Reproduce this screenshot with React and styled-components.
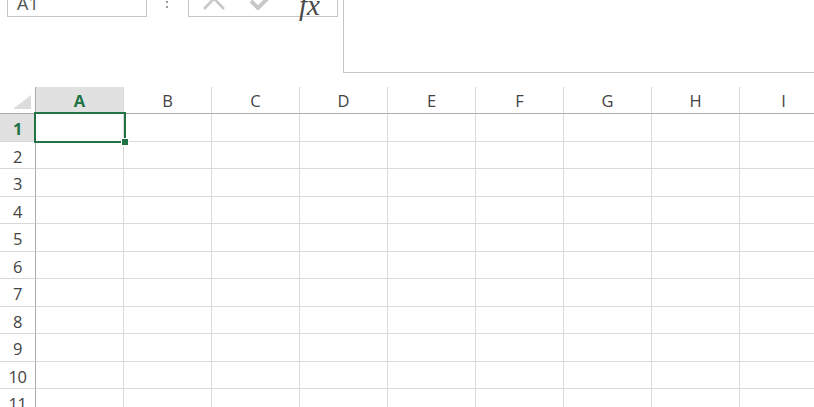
import React from 'react';
import styled, { createGlobalStyle } from 'styled-components';

const GlobalStyle = createGlobalStyle`
  html, body {
    margin: 0;
    padding: 0;
    background: #ffffff;
    overflow: hidden;
  }
  body {
    font-family: "Open Sans", "Noto Sans", "Liberation Sans", sans-serif;
    color: #444444;
  }
`;

const GREEN = '#217346';
const COLUMNS = ['A', 'B', 'C', 'D', 'E', 'F', 'G', 'H', 'I'];
const ROWS = [1, 2, 3, 4, 5, 6, 7, 8, 9, 10, 11];

const Page = styled.div`
  width: 814px;
  height: 407px;
  overflow: hidden;
  background: #ffffff;
`;

const TopBar = styled.div`
  display: flex;
  align-items: flex-start;
  height: 87px;
  padding-left: 7px;
`;

const NameBox = styled.div`
  box-sizing: border-box;
  display: flex;
  align-items: flex-end;
  justify-content: space-between;
  width: 140px;
  height: 29px;
  margin-top: -12px;
  padding: 0 9px 3px 9px;
  border: 1px solid #c6c6c6;
  font-size: 18px;
  line-height: 20px;
  color: #505050;
`;

const DropArrow = styled.span`
  font-size: 9px;
  line-height: 9px;
  margin-bottom: 13px;
  color: #707070;
`;

const Dots = styled.div`
  display: flex;
  flex-direction: column;
  gap: 3px;
  margin: 0 20px 0 19px;
  padding-top: 1px;
`;

const Dot = styled.span`
  width: 2px;
  height: 2px;
  background: #9a9a9a;
`;

const FxButtons = styled.div`
  box-sizing: border-box;
  display: flex;
  align-items: flex-end;
  gap: 22px;
  width: 150px;
  height: 29px;
  margin-top: -12px;
  padding: 0 0 6px 12px;
  border: 1px solid #c6c6c6;
`;

const FxLabel = styled.span`
  font-family: "Liberation Serif", "DejaVu Serif", serif;
  font-style: italic;
  font-size: 29px;
  line-height: 29px;
  color: #4a4a4a;
  margin-bottom: -10px;
  margin-left: 4px;
`;

const FormulaInput = styled.div`
  flex: 1;
  height: 85px;
  margin: -12px -10px 0 5px;
  border: 1px solid #c6c6c6;
  box-sizing: border-box;
`;

const Grid = styled.div`
  display: grid;
  grid-template-columns: 36px repeat(9, 88px);
  grid-template-rows: 27px repeat(5, 28px 27px) 28px;
`;

const Corner = styled.div`
  box-sizing: border-box;
  display: flex;
  align-items: flex-end;
  justify-content: flex-end;
  padding: 0 4px 4px 0;
  border-right: 1px solid #ababab;
  border-bottom: 1px solid #ababab;
`;

const ColHead = styled.div`
  box-sizing: border-box;
  display: flex;
  align-items: center;
  justify-content: center;
  padding-top: 1px;
  font-size: 16.5px;
  border-right: 1px solid #d8d8d8;
  border-bottom: 1px solid #ababab;
  background: ${(p) => (p.$active ? '#e1e1e1' : '#ffffff')};
  color: ${(p) => (p.$active ? GREEN : '#444444')};
  font-weight: ${(p) => (p.$active ? 700 : 400)};
`;

const RowHead = styled.div`
  box-sizing: border-box;
  display: flex;
  align-items: center;
  justify-content: center;
  padding-top: 2px;
  font-size: 16.5px;
  letter-spacing: -0.5px;
  border-right: 1px solid #ababab;
  border-bottom: 1px solid #d8d8d8;
  background: ${(p) => (p.$active ? '#e1e1e1' : '#ffffff')};
  color: ${(p) => (p.$active ? GREEN : '#444444')};
  font-weight: ${(p) => (p.$active ? 700 : 400)};
`;

const Cell = styled.div`
  box-sizing: border-box;
  position: relative;
  border-right: 1px solid #dadada;
  border-bottom: 1px solid #dadada;
`;

const Selection = styled.div`
  position: absolute;
  top: -2px;
  left: -2px;
  width: 92px;
  height: 31px;
  box-sizing: border-box;
  border: 2px solid ${GREEN};
  z-index: 2;
`;

const Handle = styled.span`
  position: absolute;
  right: -5px;
  bottom: -5px;
  width: 6px;
  height: 6px;
  background: ${GREEN};
  border: 1px solid #ffffff;
`;

const CancelIcon = () => (
  <svg width="26" height="26" viewBox="0 0 26 26">
    <path d="M3 4 L23 25 M23 4 L3 25" stroke="#c8c8c8" strokeWidth="2.6" fill="none" />
  </svg>
);

const EnterIcon = () => (
  <svg width="24" height="26" viewBox="0 0 24 26">
    <path d="M2 17 L9 24 L22 11" stroke="#c8c8c8" strokeWidth="4" fill="none" />
  </svg>
);

const CornerTriangle = () => (
  <svg width="18" height="14" viewBox="0 0 18 14">
    <polygon points="18,0 18,14 0,14" fill="#dcdcdc" />
  </svg>
);

export default function App() {
  return (
    <Page>
      <GlobalStyle />
      <TopBar>
        <NameBox>
          <span>A1</span>
          <DropArrow>▼</DropArrow>
        </NameBox>
        <Dots>
          <Dot />
          <Dot />
        </Dots>
        <FxButtons>
          <CancelIcon />
          <EnterIcon />
          <FxLabel>fx</FxLabel>
        </FxButtons>
        <FormulaInput />
      </TopBar>
      <Grid>
        <Corner>
          <CornerTriangle />
        </Corner>
        {COLUMNS.map((c) => (
          <ColHead key={c} $active={c === 'A'}>
            {c}
          </ColHead>
        ))}
        {ROWS.map((r) => (
          <React.Fragment key={r}>
            <RowHead $active={r === 1}>{r}</RowHead>
            {COLUMNS.map((c) => (
              <Cell key={`${c}${r}`}>
                {c === 'A' && r === 1 && (
                  <Selection>
                    <Handle />
                  </Selection>
                )}
              </Cell>
            ))}
          </React.Fragment>
        ))}
      </Grid>
    </Page>
  );
}
